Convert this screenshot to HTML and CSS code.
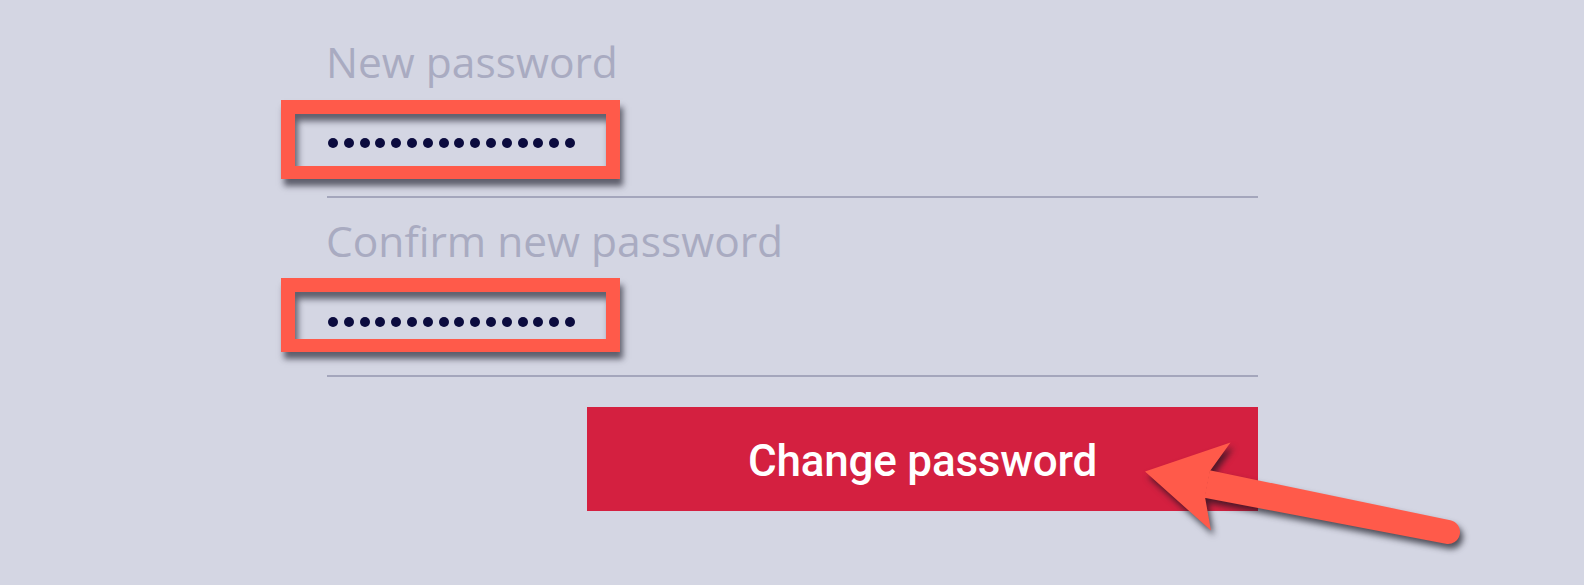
FILE: index.html
```html
<!DOCTYPE html>
<html lang="en">
<head>
<meta charset="utf-8">
<title>Change password</title>
<link rel="stylesheet" href="styles.css">
</head>
<body>
<div class="page">
  <form class="form">
    <div class="field">
      <label class="label">New password</label>
      <div class="input">
        <span class="mask" aria-label="password">
          <i></i><i></i><i></i><i></i><i></i><i></i><i></i><i></i><i></i><i></i><i></i><i></i><i></i><i></i><i></i><i></i>
        </span>
        <span class="highlight highlight-first"></span>
      </div>
    </div>
    <div class="field">
      <label class="label">Confirm new password</label>
      <div class="input">
        <span class="mask" aria-label="password">
          <i></i><i></i><i></i><i></i><i></i><i></i><i></i><i></i><i></i><i></i><i></i><i></i><i></i><i></i><i></i><i></i>
        </span>
        <span class="highlight highlight-second"></span>
      </div>
    </div>
    <div class="actions">
      <button type="button" class="btn">Change password</button>
    </div>
  </form>
  <svg class="arrow" width="1584" height="585" viewBox="0 0 1584 585" aria-hidden="true">
    <g class="arrow-shape">
      <path d="M1209.7,470.3 L1450.3,520.2 A12,12 0 0 1 1445.7,543.8 L1204.3,497.7 Z"/>
      <polygon points="1145,471.5 1230.5,442.5 1210,471 1205,497 1211,530.5"/>
    </g>
  </svg>
</div>
</body>
</html>
```
FILE: styles.css
```css
html, body {
  margin: 0;
  padding: 0;
}
body {
  background: #d4d6e3;
  font-family: "Open Sans", "Noto Sans", sans-serif;
  width: 1584px;
  height: 585px;
  overflow: hidden;
}
.page {
  position: relative;
  width: 1584px;
  height: 585px;
}
.form {
  width: 931px;
  margin-left: 327px;
  padding-top: 37px;
  display: flex;
  flex-direction: column;
  gap: 18px;
}
.field {
  display: flex;
  flex-direction: column;
}
.label {
  font-size: 42.5px;
  line-height: 50px;
  color: #a9abc1;
  letter-spacing: 0;
  margin-left: -1px;
}
.input {
  position: relative;
  height: 106px;
  padding-top: 3px;
  border-bottom: 2px solid #a4a6bc;
  display: flex;
  align-items: center;
}
.mask {
  display: flex;
  gap: 5.8px;
  margin-left: 1px;
}
.mask i {
  display: block;
  width: 10px;
  height: 10px;
  border-radius: 50%;
  background: #0b0b3e;
}
.highlight {
  position: absolute;
  left: -46px;
  width: 311px;
  border: 14px solid #ff5a4a;
  border-top-width: 14px;
  border-bottom-width: 13px;
  box-shadow: 3px 7px 6px rgba(30, 30, 45, 0.65), inset 3px 7px 6px rgba(30, 30, 45, 0.65);
}
.highlight-first {
  top: 13px;
  height: 52px;
}
.highlight-second {
  top: 12px;
  height: 47px;
}
.actions {
  display: flex;
  justify-content: flex-end;
  margin-top: 12px;
}
.btn {
  width: 671px;
  height: 104px;
  border: none;
  background: #d42040;
  color: #ffffff;
  font-family: Roboto, "Open Sans", sans-serif;
  font-size: 44px;
  font-weight: 500;
  letter-spacing: -0.2px;
  padding: 4px 0 0 0;
}
.arrow {
  position: absolute;
  left: 0;
  top: 0;
  pointer-events: none;
}
.arrow-shape {
  fill: #ff5a4a;
  filter: drop-shadow(3px 5px 3px rgba(20, 20, 30, 0.7));
}
```
